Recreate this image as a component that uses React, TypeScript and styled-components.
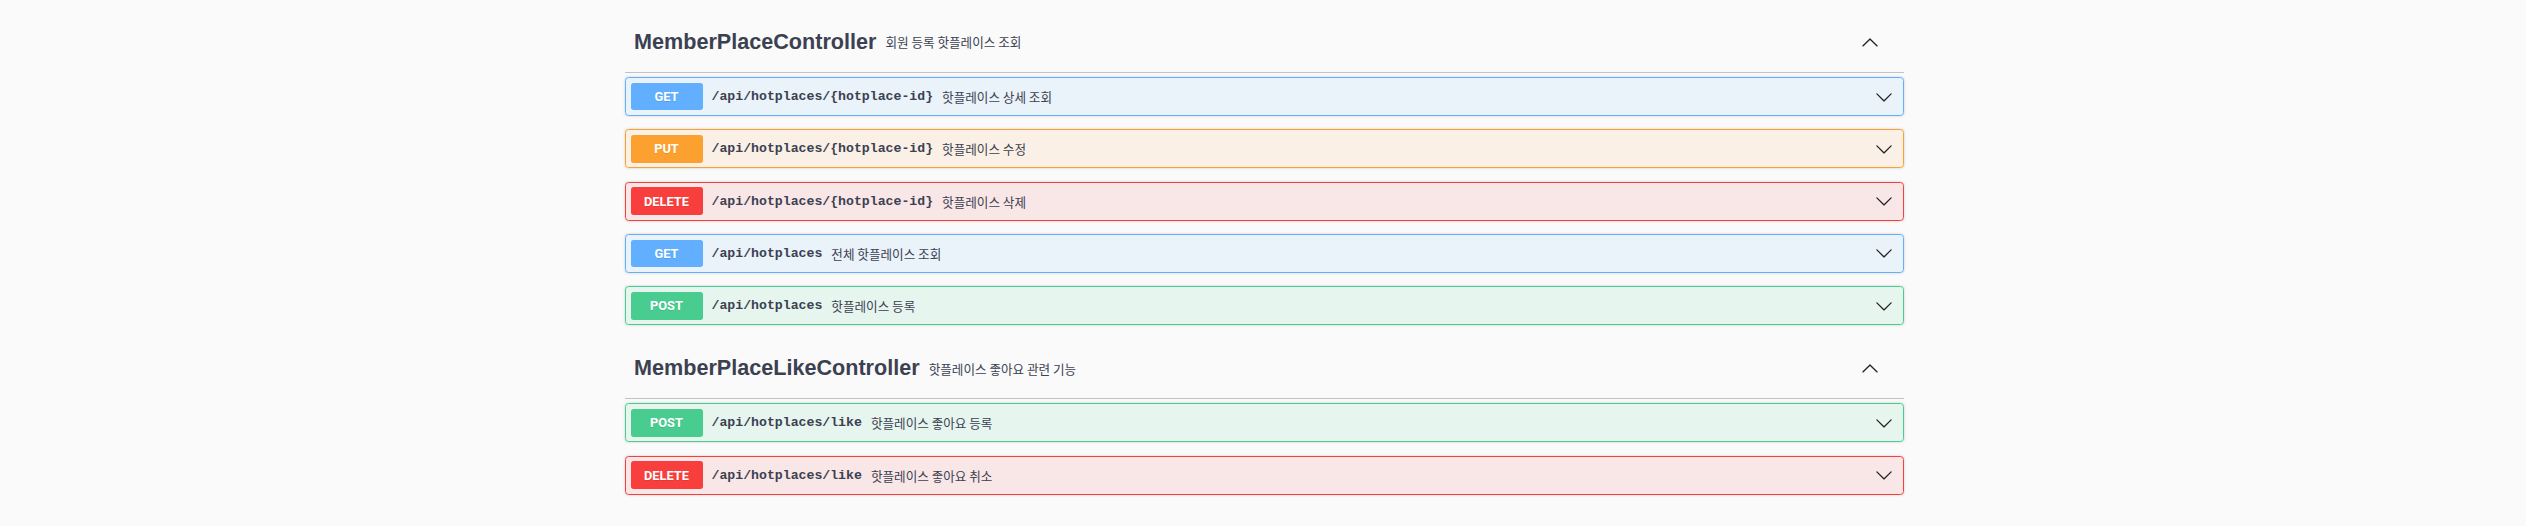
import React from "react";
import styled, { createGlobalStyle } from "styled-components";

const GlobalStyle = createGlobalStyle`
  html, body {
    margin: 0;
    padding: 0;
    background: #fafafa;
  }
  body {
    padding-left: 3px;
    font-family: "Liberation Sans", "Noto Sans CJK KR", sans-serif;
    color: #3b4151;
  }
`;

type Method = "GET" | "PUT" | "POST" | "DELETE";

const COLORS: Record<Method, { solid: string; tint: string }> = {
  GET: { solid: "#61affe", tint: "rgba(97,175,254,.1)" },
  PUT: { solid: "#fca130", tint: "rgba(252,161,48,.1)" },
  POST: { solid: "#49cc90", tint: "rgba(73,204,144,.1)" },
  DELETE: { solid: "#f93e3e", tint: "rgba(249,62,62,.1)" },
};

const Wrapper = styled.div`
  max-width: 1279px;
  margin: 0 auto;
  padding-top: 12.3px;
  box-sizing: border-box;
`;

const TagSection = styled.section`
  display: flex;
  flex-direction: column;
`;

const TagHeader = styled.h3`
  display: flex;
  align-items: center;
  min-height: 41.4px;
  margin: 0 0 4.5px;
  padding: 9px 18px 9px 9px;
  border-bottom: 1px solid rgba(59, 65, 81, 0.3);
`;

const TagTitle = styled.span`
  font-family: "Liberation Sans", sans-serif;
  font-size: 21.6px;
  font-weight: 700;
  color: #3b4151;
  white-space: nowrap;
`;

const TagDesc = styled.small`
  flex: 1;
  padding: 0 9px;
  font-family: "Noto Sans CJK KR", sans-serif;
  font-size: 12.6px;
  font-weight: 400;
  color: #3b4151;
`;

const ToggleButton = styled.button`
  display: flex;
  align-items: center;
  justify-content: center;
  background: none;
  border: none;
  padding: 0;
  margin-right: 7px;
  cursor: pointer;
`;

const OpBlock = styled.div<{ $method: Method }>`
  margin: 0 0 13.5px;
  border: 1px solid ${(p) => COLORS[p.$method].solid};
  background: ${(p) => COLORS[p.$method].tint};
  border-radius: 3.6px;
  box-shadow: 0 0 2.7px rgba(0, 0, 0, 0.19);
`;

const Summary = styled.div`
  display: flex;
  align-items: center;
  padding: 4.5px;
  cursor: pointer;
`;

const MethodBadge = styled.span<{ $method: Method }>`
  min-width: 72px;
  padding: 5.4px 0;
  line-height: 17px;
  text-align: center;
  border-radius: 2.7px;
  background: ${(p) => COLORS[p.$method].solid};
  color: #fff;
  font-family: Roboto, "Liberation Sans", sans-serif;
  font-size: 12.8px;
  font-weight: 700;
  text-shadow: 0 1px 0 rgba(0, 0, 0, 0.1);
`;

const Path = styled.span`
  padding: 0 9px;
  font-family: "Liberation Mono", monospace;
  font-size: 13.2px;
  font-weight: 700;
  color: #3b4151;
  white-space: nowrap;
`;

const OpDesc = styled.div`
  flex: 1;
  font-family: "Noto Sans CJK KR", sans-serif;
  font-size: 12.6px;
  color: #3b4151;
`;

const Chevron = styled.svg`
  width: 18px;
  height: 18px;
  margin-right: 6px;
  flex: none;
  fill: #222;
`;

const UpChevron = styled.svg`
  width: 18px;
  height: 18px;
  fill: #222;
`;

const ARROW =
  "M17.418 6.109c.272-.268.709-.268.979 0s.271.701 0 .969l-7.908 7.83c-.27.268-.707.268-.979 0l-7.908-7.83c-.27-.268-.27-.701 0-.969.271-.268.709-.268.979 0L10 13.25l7.418-7.141z";
const ARROW_UP =
  "M 17.418 14.908 C 17.69 15.176 18.127 15.176 18.397 14.908 C 18.667 14.64 18.668 14.207 18.397 13.939 L 10.489 6.109 C 10.219 5.841 9.782 5.841 9.51 6.109 L 1.602 13.939 C 1.332 14.207 1.332 14.64 1.602 14.908 C 1.873 15.176 2.311 15.176 2.581 14.908 L 10 7.767 L 17.418 14.908 Z";

type Op = { method: Method; path: string; desc: string };
type Tag = { name: string; desc: string; ops: Op[] };

const TAGS: Tag[] = [
  {
    name: "MemberPlaceController",
    desc: "회원 등록 핫플레이스 조회",
    ops: [
      { method: "GET", path: "/api/hotplaces/{hotplace-id}", desc: "핫플레이스 상세 조회" },
      { method: "PUT", path: "/api/hotplaces/{hotplace-id}", desc: "핫플레이스 수정" },
      { method: "DELETE", path: "/api/hotplaces/{hotplace-id}", desc: "핫플레이스 삭제" },
      { method: "GET", path: "/api/hotplaces", desc: "전체 핫플레이스 조회" },
      { method: "POST", path: "/api/hotplaces", desc: "핫플레이스 등록" },
    ],
  },
  {
    name: "MemberPlaceLikeController",
    desc: "핫플레이스 좋아요 관련 기능",
    ops: [
      { method: "POST", path: "/api/hotplaces/like", desc: "핫플레이스 좋아요 등록" },
      { method: "DELETE", path: "/api/hotplaces/like", desc: "핫플레이스 좋아요 취소" },
    ],
  },
];

export default function App() {
  return (
    <>
      <GlobalStyle />
      <Wrapper>
        {TAGS.map((tag) => (
          <TagSection key={tag.name}>
            <TagHeader>
              <TagTitle>{tag.name}</TagTitle>
              <TagDesc>{tag.desc}</TagDesc>
              <ToggleButton aria-label="collapse">
                <UpChevron viewBox="0 0 20 20">
                  <path d={ARROW_UP} />
                </UpChevron>
              </ToggleButton>
            </TagHeader>
            {tag.ops.map((op, i) => (
              <OpBlock key={i} $method={op.method}>
                <Summary>
                  <MethodBadge $method={op.method}>{op.method}</MethodBadge>
                  <Path>{op.path}</Path>
                  <OpDesc>{op.desc}</OpDesc>
                  <Chevron viewBox="0 0 20 20">
                    <path d={ARROW} />
                  </Chevron>
                </Summary>
              </OpBlock>
            ))}
          </TagSection>
        ))}
      </Wrapper>
    </>
  );
}
